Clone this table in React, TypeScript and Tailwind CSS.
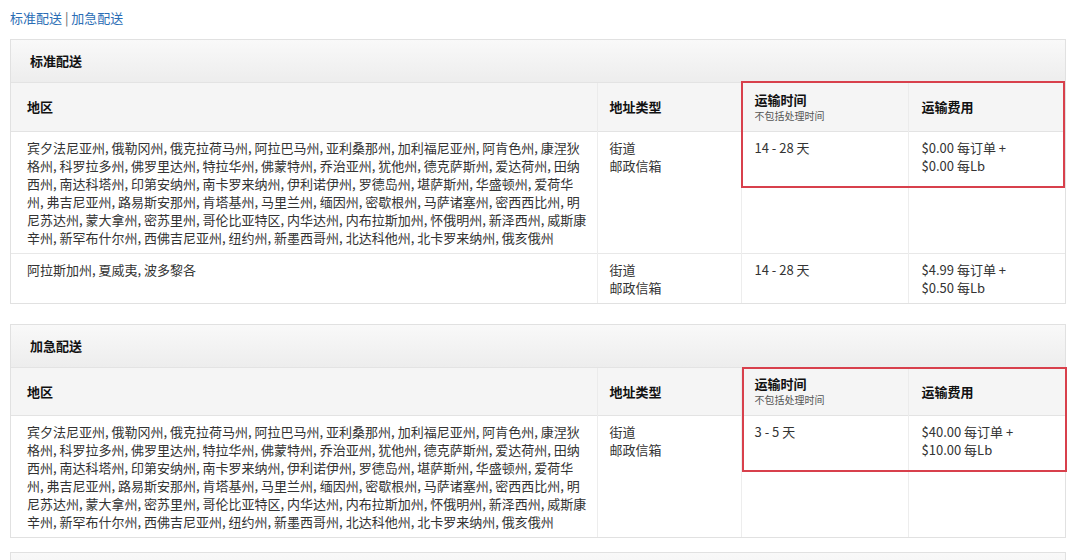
import type { ReactNode } from 'react';

type Row = {
  region: string;
  types: string[];
  time: string;
  fee: string[];
};

const ALL_STATES =
  '宾夕法尼亚州, 俄勒冈州, 俄克拉荷马州, 阿拉巴马州, 亚利桑那州, 加利福尼亚州, 阿肯色州, 康涅狄格州, 科罗拉多州, 佛罗里达州, 特拉华州, 佛蒙特州, 乔治亚州, 犹他州, 德克萨斯州, 爱达荷州, 田纳西州, 南达科塔州, 印第安纳州, 南卡罗来纳州, 伊利诺伊州, 罗德岛州, 堪萨斯州, 华盛顿州, 爱荷华州, 弗吉尼亚州, 路易斯安那州, 肯塔基州, 马里兰州, 缅因州, 密歇根州, 马萨诸塞州, 密西西比州, 明尼苏达州, 蒙大拿州, 密苏里州, 哥伦比亚特区, 内华达州, 内布拉斯加州, 怀俄明州, 新泽西州, 威斯康辛州, 新罕布什尔州, 西佛吉尼亚州, 纽约州, 新墨西哥州, 北达科他州, 北卡罗来纳州, 俄亥俄州';

const STANDARD: Row[] = [
  { region: ALL_STATES, types: ['街道', '邮政信箱'], time: '14 - 28 天', fee: ['$0.00 每订单 +', '$0.00 每Lb'] },
  { region: '阿拉斯加州, 夏威夷, 波多黎各', types: ['街道', '邮政信箱'], time: '14 - 28 天', fee: ['$4.99 每订单 +', '$0.50 每Lb'] },
];

const EXPEDITED: Row[] = [
  { region: ALL_STATES, types: ['街道', '邮政信箱'], time: '3 - 5 天', fee: ['$40.00 每订单 +', '$10.00 每Lb'] },
];

function Th({ children, className = '' }: { children: ReactNode; className?: string }) {
  return (
    <th className={`text-left align-middle font-bold text-[13px] text-[#111] border-r border-[#ebebeb] last:border-r-0 ${className}`}>
      {children}
    </th>
  );
}

function ShippingPanel({ title, rows, boxClass }: { title: string; rows: Row[]; boxClass: string }) {
  return (
    <section className="relative w-[1056px] border border-[#e1e1e1] bg-white">
      {/* 标题栏 */}
      <div className="h-[43px] flex items-center pl-[19px] bg-gradient-to-b from-[#f9f9f9] to-[#ededed] border-b border-[#e3e3e3]">
        <h3 className="text-[13px] font-bold text-[#111]">{title}</h3>
      </div>

      <table className="w-full table-fixed border-collapse">
        <colgroup>
          <col className="w-[586px]" />
          <col className="w-[144px]" />
          <col className="w-[167px]" />
          <col className="w-[157px]" />
        </colgroup>
        <thead>
          <tr className="h-[48px] bg-[#f5f5f5] border-b border-[#e3e3e3]">
            <Th className="pl-[16px]">地区</Th>
            <Th className="pl-[12px]">地址类型</Th>
            <Th className="pl-[13px]">
              <div className="leading-[18px]">运输时间</div>
              <div className="text-[10px] font-normal text-[#555] leading-[14px]">不包括处理时间</div>
            </Th>
            <Th className="pl-[13px]">运输费用</Th>
          </tr>
        </thead>
        <tbody>
          {rows.map((r, i) => (
            <tr key={i} className="border-b border-[#e8e8e8] last:border-b-0 align-top text-[13px] leading-[18px] text-[#333]">
              <td className="pl-[16px] pr-[10px] pt-[7px] pb-[6px] border-r border-[#ededed]">{r.region}</td>
              <td className="pl-[12px] pt-[7px] pb-[6px] border-r border-[#ededed]">
                {r.types.map(t => <div key={t}>{t}</div>)}
              </td>
              <td className="pl-[13px] pt-[7px] pb-[6px] border-r border-[#ededed]">{r.time}</td>
              <td className="pl-[13px] pt-[7px] pb-[6px]">
                {r.fee.map(f => <div key={f}>{f}</div>)}
              </td>
            </tr>
          ))}
        </tbody>
      </table>

      {/* 红框标注 */}
      <div className={`absolute pointer-events-none border-2 border-[#d8404c] ${boxClass}`} />
    </section>
  );
}

export default function App() {
  return (
    <div className="min-h-[560px] bg-white px-[10px] pt-[9px] font-['Noto_Sans_CJK_SC','Noto_Sans',sans-serif]">
      <div className="text-[13px] leading-[18px] text-[#2a6db5]">
        <a href="#standard">标准配送</a>
        <span className="text-[#666]"> | </span>
        <a href="#expedited">加急配送</a>
      </div>

      <div className="mt-[12px] flex flex-col gap-[20px]">
        <ShippingPanel title="标准配送" rows={STANDARD} boxClass="left-[730px] top-[41px] w-[324px] h-[107px]" />
        <ShippingPanel title="加急配送" rows={EXPEDITED} boxClass="left-[731px] top-[42px] w-[325px] h-[105px]" />
      </div>
      <div className="mt-[14px] w-[1056px] h-[20px] border border-[#e1e1e1] border-b-0 bg-gradient-to-b from-[#f9f9f9] to-[#f3f3f3]" />
    </div>
  );
}
